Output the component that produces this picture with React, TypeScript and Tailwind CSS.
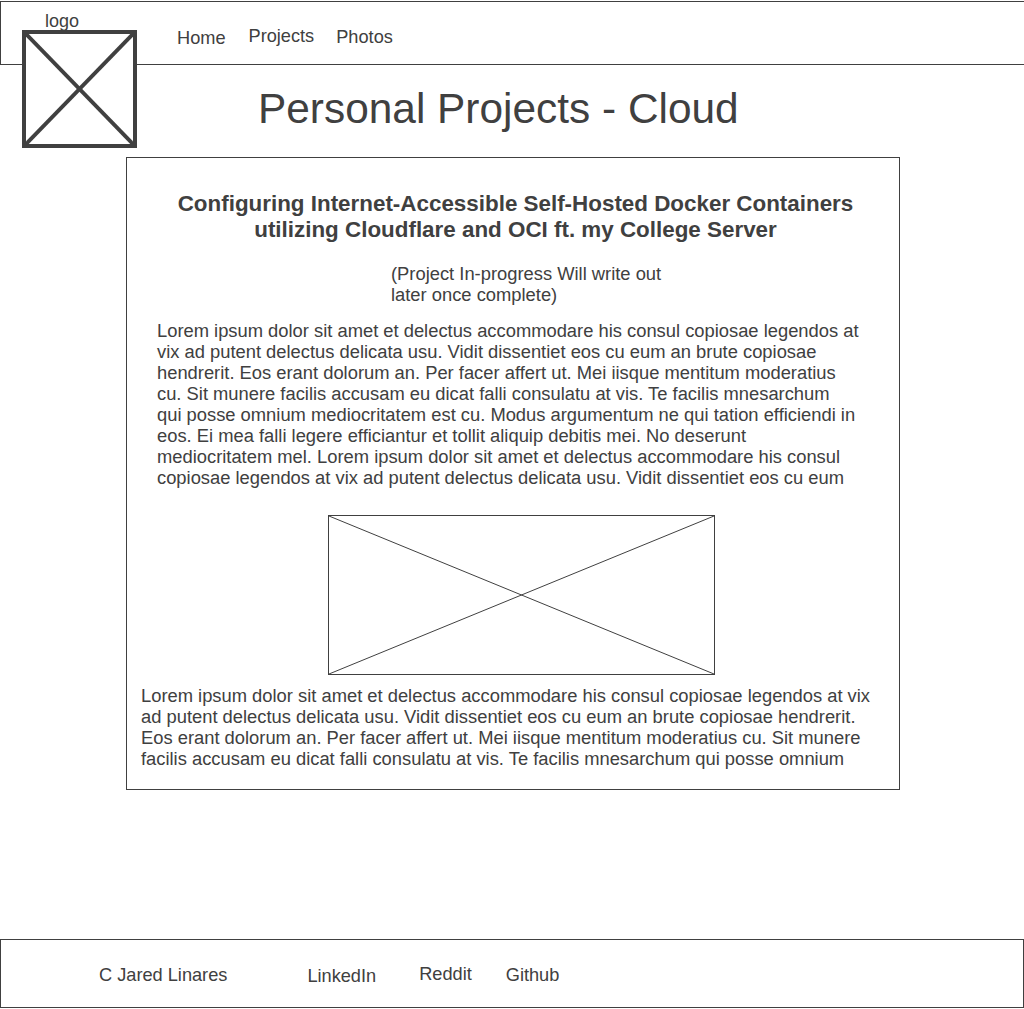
// Wireframe page: Personal Projects - Cloud

const lorem1Lines = [
  'Lorem ipsum dolor sit amet et delectus accommodare his consul copiosae legendos at',
  'vix ad putent delectus delicata usu. Vidit dissentiet eos cu eum an brute copiosae',
  'hendrerit. Eos erant dolorum an. Per facer affert ut. Mei iisque mentitum moderatius',
  'cu. Sit munere facilis accusam eu dicat falli consulatu at vis. Te facilis mnesarchum',
  'qui posse omnium mediocritatem est cu. Modus argumentum ne qui tation efficiendi in',
  'eos. Ei mea falli legere efficiantur et tollit aliquip debitis mei. No deserunt',
  'mediocritatem mel. Lorem ipsum dolor sit amet et delectus accommodare his consul',
  'copiosae legendos at vix ad putent delectus delicata usu. Vidit dissentiet eos cu eum',
];

const lorem2 =
  'Lorem ipsum dolor sit amet et delectus accommodare his consul copiosae legendos at vix ad putent delectus delicata usu. Vidit dissentiet eos cu eum an brute copiosae hendrerit. Eos erant dolorum an. Per facer affert ut. Mei iisque mentitum moderatius cu. Sit munere facilis accusam eu dicat falli consulatu at vis. Te facilis mnesarchum qui posse omnium';

function Placeholder({ stroke }: { stroke: number }) {
  return (
    <svg className="block h-full w-full" viewBox="0 0 100 100" preserveAspectRatio="none">
      <line x1="0" y1="0" x2="100" y2="100" stroke="#404040" strokeWidth={stroke} vectorEffect="non-scaling-stroke" />
      <line x1="100" y1="0" x2="0" y2="100" stroke="#404040" strokeWidth={stroke} vectorEffect="non-scaling-stroke" />
    </svg>
  );
}

export default function App() {
  return (
    <div className="w-[1024px] min-h-[1009px] overflow-hidden bg-white font-['Liberation_Sans',Arial,sans-serif] text-[#404040]">
      {/* Header */}
      <header className="mt-[1px] flex h-[64px] border-y border-l border-[#404040]">
        <div className="ml-[21px] flex shrink-0 flex-col">
          <span className="mt-[9px] h-[20px] shrink-0 pl-[23px] text-[18px] leading-[20px]">logo</span>
          <div className="-mt-[1px] h-[118px] w-[115px] shrink-0 border-4 border-[#404040] bg-white">
            <Placeholder stroke={4} />
          </div>
        </div>
        <nav className="ml-[40px] flex items-start text-[18.2px] leading-[21px]">
          <a className="mt-[26px]">Home</a>
          <a className="ml-[23px] mt-[24px]">Projects</a>
          <a className="ml-[22px] mt-[25px]">Photos</a>
        </nav>
      </header>

      {/* Page title */}
      <h1 className="mt-[20px] pl-[258px] text-[42.4px] leading-[48px]">Personal Projects - Cloud</h1>

      {/* Project card */}
      <section className="ml-[126px] mt-[24px] w-[774px] border border-[#404040] pb-[20px]">
        <h2 className="mt-[33px] pl-[5px] text-center text-[22.4px] font-bold leading-[26px]">
          Configuring Internet-Accessible Self-Hosted Docker Containers
          <br />
          utilizing Cloudflare and OCI ft. my College Server
        </h2>

        <p className="ml-[264px] mt-[20px] w-[292px] text-[18.35px] leading-[21px]">
          (Project In-progress Will write out later once complete)
        </p>

        <p className="ml-[30px] mt-[15px] w-[720px] text-[18.35px] leading-[21px]">
          {lorem1Lines.map((line, i) => (
            <span key={i} className="block whitespace-nowrap">
              {line}
            </span>
          ))}
        </p>

        <div className="ml-[201px] mt-[27px] h-[160px] w-[387px] border border-[#404040]">
          <Placeholder stroke={1} />
        </div>

        <p className="ml-[14px] mt-[10px] w-[742px] text-[18.35px] leading-[21px]">{lorem2}</p>
      </section>

      {/* Footer */}
      <footer className="mt-[149px] flex h-[69px] items-start border border-[#404040] pl-[98px] text-[18.2px] leading-[21px]">
        <span className="mt-[25px]">C Jared Linares</span>
        <a className="ml-[80px] mt-[26px]">LinkedIn</a>
        <a className="ml-[43px] mt-[24px]">Reddit</a>
        <a className="ml-[34px] mt-[25px]">Github</a>
      </footer>
    </div>
  );
}
